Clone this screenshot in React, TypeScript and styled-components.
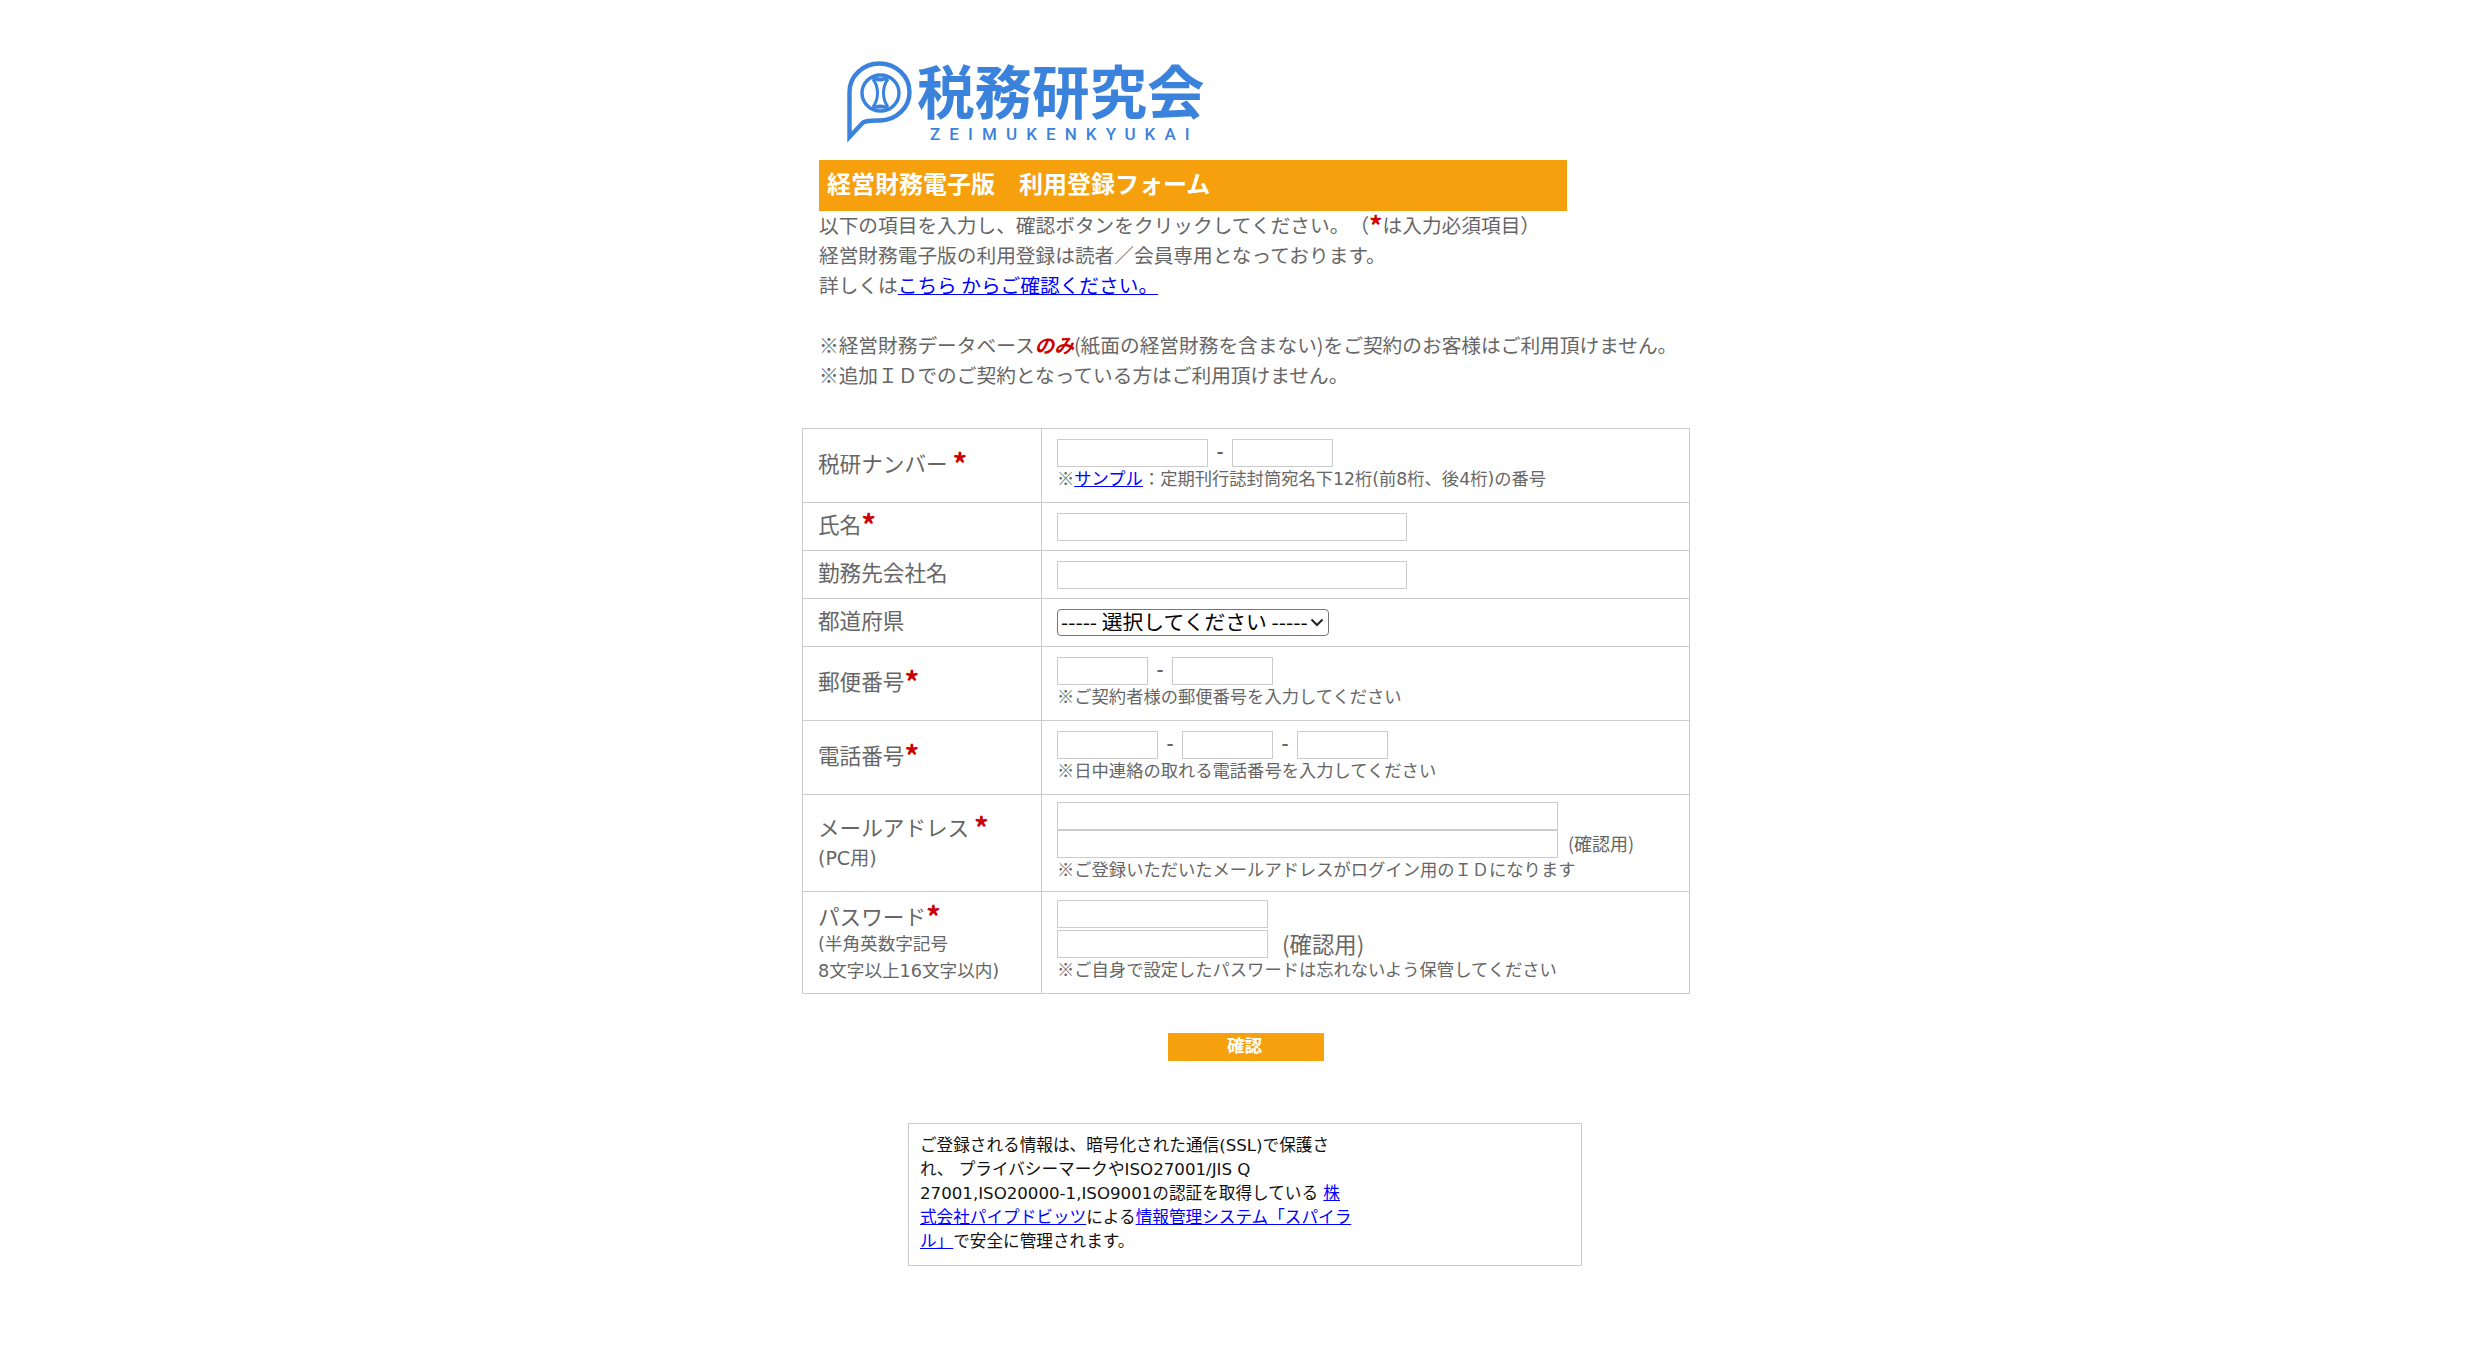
import React from 'react';
import styled, { createGlobalStyle } from 'styled-components';

const GlobalStyle = createGlobalStyle`
  html, body {
    margin: 0;
    padding: 0;
    background: #fff;
    color: #666;
    font-family: "Noto Sans CJK JP", "Noto Sans", sans-serif;
  }
`;

const chevron =
  "url(\"data:image/svg+xml,%3Csvg xmlns='http://www.w3.org/2000/svg' width='14' height='9' viewBox='0 0 14 9'%3E%3Cpath d='M1.5 1.5 L7 7 L12.5 1.5' fill='none' stroke='%23222' stroke-width='2'/%3E%3C/svg%3E\")";

const Page = styled.div`
  width: 888px;
  margin: 0 auto;
  padding-bottom: 81px;
`;

const LogoRow = styled.div`
  display: flex;
  height: 160px;
  box-sizing: border-box;
  padding: 55px 0 0 38px;
`;

const LogoMark = styled.svg`
  width: 77px;
  height: 95px;
  flex: none;
`;

const LogoText = styled.div`
  display: flex;
  flex-direction: column;
  color: #3a82dc;
`;

const LogoName = styled.div`
  font-size: 57.5px;
  font-weight: 700;
  line-height: 68px;
  white-space: nowrap;
`;

const LogoRoman = styled.div`
  margin: 3px 0 0 13px;
  font-family: "Roboto", "Liberation Sans", sans-serif;
  font-size: 17px;
  font-weight: 500;
  line-height: 16px;
  letter-spacing: 9.1px;
  white-space: nowrap;
`;

const Intro = styled.div`
  margin-left: 17px;
  font-size: 19.7px;
  line-height: 30px;
  white-space: nowrap;
  text-spacing-trim: space-all;
`;

const Lead = styled.div`
  margin-top: -1px;
`;

const Banner = styled.h1`
  margin: 0;
  width: 748px;
  height: 51px;
  box-sizing: border-box;
  padding-left: 8px;
  background: #f5a00c;
  color: #fff;
  font-size: 24px;
  font-weight: 700;
  line-height: 45px;
`;

const TextLink = styled.a`
  color: #00f;
  text-decoration: underline;
`;

const Required = styled.span`
  color: #c00;
  font-weight: 700;
  font-size: 1.35em;
  line-height: 1;
  vertical-align: -0.12em;
`;

const Only = styled.em`
  color: #c00;
  font-weight: 700;
  font-style: italic;
`;

const FormTable = styled.table`
  width: 888px;
  margin-top: 38px;
  table-layout: fixed;
  border-collapse: collapse;
`;

const LabelCell = styled.td<{ $multi?: boolean }>`
  width: 239px;
  box-sizing: border-box;
  padding: 0 0 ${(p) => (p.$multi ? 0 : 6)}px 15px;
  border: 1px solid #ccc;
  font-size: 21.6px;
  line-height: 30px;
  vertical-align: middle;
`;

const FieldCell = styled.td<{ $top?: number; $bottom?: number }>`
  padding: ${(p) => p.$top ?? 10}px 0 ${(p) => p.$bottom ?? 9}px 15px;
  border: 1px solid #ccc;
  vertical-align: top;
`;

const SubLabel = styled.div<{ $size?: number; $lh?: number }>`
  font-family: "DejaVu Sans", "Noto Sans CJK JP", sans-serif;
  font-size: ${(p) => p.$size ?? 17.6}px;
  line-height: ${(p) => p.$lh ?? 27}px;
`;

const InputRow = styled.div<{ $gap?: number; $top?: number }>`
  display: flex;
  align-items: center;
  gap: ${(p) => p.$gap ?? 0}px;
  margin-top: ${(p) => p.$top ?? 0}px;
`;

const TextInput = styled.input<{ $w: number }>`
  display: block;
  flex: none;
  width: ${(p) => p.$w}px;
  height: 28px;
  box-sizing: border-box;
  padding: 0;
  border: 1px solid #ccc;
  background: #fff;
`;

const Dash = styled.span`
  flex: none;
  width: 24px;
  padding-bottom: 5px;
  text-align: center;
  font-size: 19.2px;
  font-weight: 700;
  line-height: 23px;
`;

const Note = styled.div`
  padding-bottom: 2px;
  font-family: "DejaVu Sans", "Noto Sans CJK JP", sans-serif;
  font-size: 17.3px;
  line-height: 24px;
  white-space: nowrap;
`;

const NoteMark = styled.span`
  font-family: "Noto Sans CJK JP", sans-serif;
  line-height: 1;
`;

const ConfirmSmall = styled.span`
  padding-bottom: 1px;
  font-size: 18px;
  line-height: 27px;
`;

const ConfirmLarge = styled.span`
  padding-bottom: 2px;
  font-size: 22.4px;
  line-height: 26px;
`;

const PrefSelect = styled.select`
  display: block;
  width: 272px;
  height: 27px;
  box-sizing: border-box;
  padding: 0 0 4px 3px;
  appearance: none;
  font-family: inherit;
  font-size: 20.8px;
  line-height: 22px;
  color: #000;
  background: #fff ${chevron} no-repeat right 4px center;
  border: 1px solid #767676;
  border-radius: 4px;
`;

const Actions = styled.div`
  display: flex;
  justify-content: center;
  margin-top: 39px;
`;

const ConfirmButton = styled.button`
  width: 156px;
  height: 28px;
  padding: 0 3px 4px 0;
  border: none;
  border-radius: 1px;
  background: #f5a00c;
  color: #fff;
  font-family: inherit;
  font-size: 17.6px;
  font-weight: 700;
  line-height: 24px;
`;

const SecurityNote = styled.div`
  width: 674px;
  height: 143px;
  box-sizing: border-box;
  margin: 62px 0 0 106px;
  padding: 10px 11px;
  border: 1px solid #ccc;
  color: #111;
  font-family: "DejaVu Sans", "Noto Sans CJK JP", sans-serif;
  font-size: 16.64px;
  line-height: 24px;
  white-space: nowrap;
`;

export default function App() {
  return (
    <Page>
      <GlobalStyle />
      <LogoRow>
        <LogoMark viewBox="0 0 77 95" aria-hidden="true">
          <g fill="none" stroke="#3a82dc">
            <path d="M9.5 82 V37 A30 28.5 0 1 1 40 65.5 C34 65.5 28 65 23 67.5 Z" strokeWidth="4.4" />
            <ellipse cx="40.5" cy="38" rx="18.5" ry="18" strokeWidth="3.4" />
            <path d="M33 24 C39 32 39 44 33 52 M48 24 C42 32 42 44 48 52" strokeWidth="3" />
          </g>
          <path d="M31 22 Q40 29 50 22 Q40 25 31 22 Z M31 54 Q40 47 50 54 Q40 51 31 54 Z" fill="#3a82dc" stroke="#3a82dc" strokeWidth="2" />
        </LogoMark>
        <LogoText>
          <LogoName>税務研究会</LogoName>
          <LogoRoman>ZEIMUKENKYUKAI</LogoRoman>
        </LogoText>
      </LogoRow>

      <Intro>
        <Banner>経営財務電子版　利用登録フォーム</Banner>
        <Lead>
          以下の項目を入力し、確認ボタンをクリックしてください。（<Required>*</Required>は入力必須項目）
          <br />
          経営財務電子版の利用登録は読者／会員専用となっております。
          <br />
          詳しくは<TextLink href="#">こちら からご確認ください。</TextLink>
          <br />
          <br />
          ※経営財務データベース<Only>のみ</Only>(紙面の経営財務を含まない)をご契約のお客様はご利用頂けません。
          <br />
          ※追加ＩＤでのご契約となっている方はご利用頂けません。
        </Lead>
      </Intro>

      <FormTable>
        <tbody>
          <tr>
            <LabelCell>
              税研ナンバー <Required>*</Required>
            </LabelCell>
            <FieldCell>
              <InputRow>
                <TextInput $w={151} />
                <Dash>-</Dash>
                <TextInput $w={101} />
              </InputRow>
              <Note>
                <NoteMark>※</NoteMark><TextLink href="#">サンプル</TextLink>：定期刊行誌封筒宛名下12桁(前8桁、後4桁)の番号
              </Note>
            </FieldCell>
          </tr>
          <tr>
            <LabelCell>
              氏名<Required>*</Required>
            </LabelCell>
            <FieldCell>
              <TextInput $w={350} />
            </FieldCell>
          </tr>
          <tr>
            <LabelCell>勤務先会社名</LabelCell>
            <FieldCell>
              <TextInput $w={350} />
            </FieldCell>
          </tr>
          <tr>
            <LabelCell>都道府県</LabelCell>
            <FieldCell $bottom={10}>
              <PrefSelect defaultValue="">
                <option value="">----- 選択してください -----</option>
              </PrefSelect>
            </FieldCell>
          </tr>
          <tr>
            <LabelCell>
              郵便番号<Required>*</Required>
            </LabelCell>
            <FieldCell>
              <InputRow>
                <TextInput $w={91} />
                <Dash>-</Dash>
                <TextInput $w={101} />
              </InputRow>
              <Note><NoteMark>※</NoteMark>ご契約者様の郵便番号を入力してください</Note>
            </FieldCell>
          </tr>
          <tr>
            <LabelCell>
              電話番号<Required>*</Required>
            </LabelCell>
            <FieldCell>
              <InputRow>
                <TextInput $w={101} />
                <Dash>-</Dash>
                <TextInput $w={91} />
                <Dash>-</Dash>
                <TextInput $w={91} />
              </InputRow>
              <Note><NoteMark>※</NoteMark>日中連絡の取れる電話番号を入力してください</Note>
            </FieldCell>
          </tr>
          <tr>
            <LabelCell $multi>
              メールアドレス <Required>*</Required>
              <SubLabel $size={19} $lh={32}>(PC用)</SubLabel>
            </LabelCell>
            <FieldCell $top={7} $bottom={7}>
              <TextInput $w={501} />
              <InputRow $gap={10}>
                <TextInput $w={501} />
                <ConfirmSmall>(確認用)</ConfirmSmall>
              </InputRow>
              <Note><NoteMark>※</NoteMark>ご登録いただいたメールアドレスがログイン用のＩＤになります</Note>
            </FieldCell>
          </tr>
          <tr>
            <LabelCell $multi>
              パスワード<Required>*</Required>
              <SubLabel>(半角英数字記号</SubLabel>
              <SubLabel>8文字以上16文字以内)</SubLabel>
            </LabelCell>
            <FieldCell $top={8} $bottom={9}>
              <TextInput $w={211} />
              <InputRow $gap={14} $top={2}>
                <TextInput $w={211} />
                <ConfirmLarge>(確認用)</ConfirmLarge>
              </InputRow>
              <Note><NoteMark>※</NoteMark>ご自身で設定したパスワードは忘れないよう保管してください</Note>
            </FieldCell>
          </tr>
        </tbody>
      </FormTable>

      <Actions>
        <ConfirmButton type="button">確認</ConfirmButton>
      </Actions>

      <SecurityNote>
        ご登録される情報は、暗号化された通信(SSL)で保護さ
        <br />
        れ、 プライバシーマークやISO27001/JIS Q
        <br />
        27001,ISO20000-1,ISO9001の認証を取得している <TextLink href="#">株</TextLink>
        <br />
        <TextLink href="#">式会社パイプドビッツ</TextLink>による<TextLink href="#">情報管理システム「スパイラ</TextLink>
        <br />
        <TextLink href="#">ル」</TextLink>で安全に管理されます。
      </SecurityNote>
    </Page>
  );
}
